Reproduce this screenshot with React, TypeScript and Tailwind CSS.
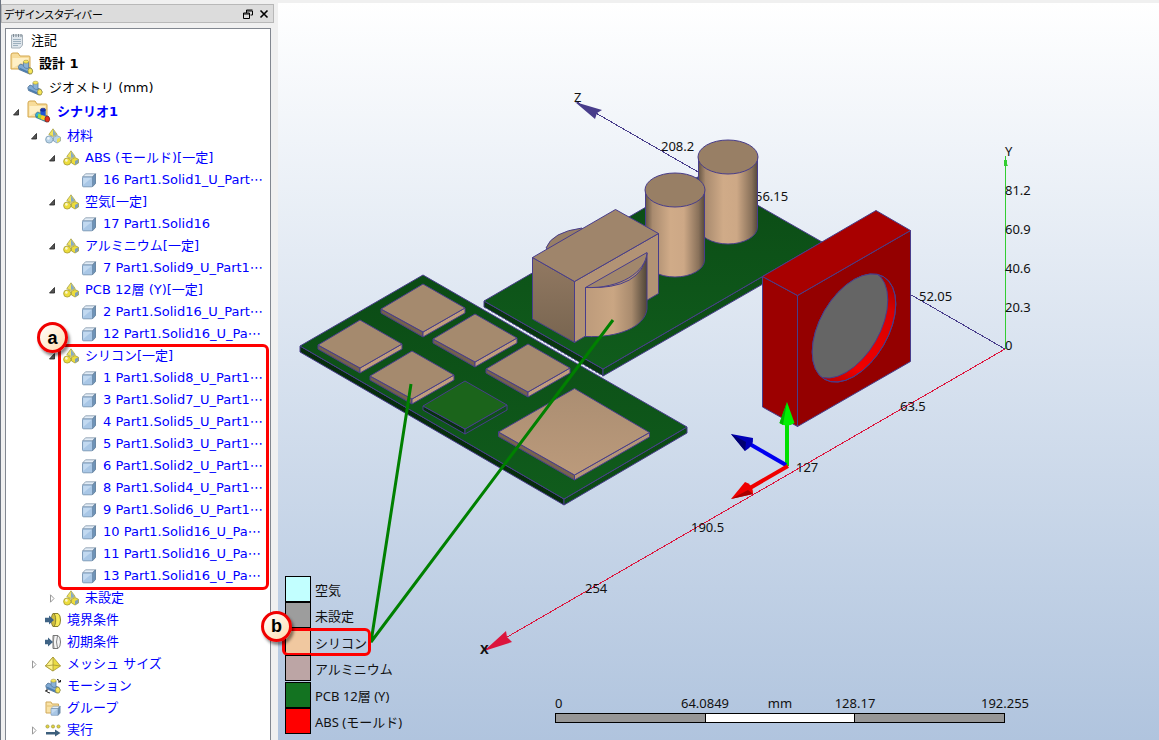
import { useState } from "react";
import type { ReactNode } from "react";

type IconName =
  | "note"
  | "designFolder"
  | "geometry"
  | "scenarioFolder"
  | "materials"
  | "material"
  | "part"
  | "boundary"
  | "initial"
  | "mesh"
  | "motion"
  | "group"
  | "run";

type TreeItem = {
  label: string;
  icon: IconName;
  depth: number;
  closed?: boolean;
  marked?: boolean;
  children?: TreeItem[];
};

const part = (label: string): TreeItem => ({ label, icon: "part", depth: 3 });

const tree: TreeItem[] = [
  { label: "材料", icon: "materials", depth: 1, children: [
    { label: "ABS (モールド)[一定]", icon: "material", depth: 2, children: [part("16 Part1.Solid1_U_Part⋯")] },
    { label: "空気[一定]", icon: "material", depth: 2, children: [part("17 Part1.Solid16")] },
    { label: "アルミニウム[一定]", icon: "material", depth: 2, children: [part("7 Part1.Solid9_U_Part1⋯")] },
    { label: "PCB 12層 (Y)[一定]", icon: "material", depth: 2, children: [
      part("2 Part1.Solid16_U_Part⋯"),
      part("12 Part1.Solid16_U_Pa⋯"),
    ] },
    { label: "シリコン[一定]", icon: "material", depth: 2, marked: true, children: [
      part("1 Part1.Solid8_U_Part1⋯"),
      part("3 Part1.Solid7_U_Part1⋯"),
      part("4 Part1.Solid5_U_Part1⋯"),
      part("5 Part1.Solid3_U_Part1⋯"),
      part("6 Part1.Solid2_U_Part1⋯"),
      part("8 Part1.Solid4_U_Part1⋯"),
      part("9 Part1.Solid6_U_Part1⋯"),
      part("10 Part1.Solid16_U_Pa⋯"),
      part("11 Part1.Solid16_U_Pa⋯"),
      part("13 Part1.Solid16_U_Pa⋯"),
    ] },
    { label: "未設定", icon: "material", depth: 2, closed: true, children: [] },
  ] },
  { label: "境界条件", icon: "boundary", depth: 1 },
  { label: "初期条件", icon: "initial", depth: 1 },
  { label: "メッシュ サイズ", icon: "mesh", depth: 1, closed: true, children: [] },
  { label: "モーション", icon: "motion", depth: 1 },
  { label: "グループ", icon: "group", depth: 1 },
  { label: "実行", icon: "run", depth: 1, closed: true, children: [] },
];

const indent = ["pl-[4px]", "pl-[22px]", "pl-[40px]", "pl-[58px]"];

function Pipe({ hot = false }: { hot?: boolean }) {
  return (
    <g strokeLinejoin="round">
      <path d="M3 5 L14 9.5 Q16 12 14 14.5 L12 15 L1.5 10.5 Q-.5 7 3 5Z" fill={hot ? "#2fb4d8" : "#7fa9d3"} stroke="#4f7194" strokeWidth=".8" />
      <path d="M2 9.5 L12 14" stroke={hot ? "#1d7f9c" : "#4c7cac"} strokeWidth="1.5" />
      <path d="M6 7.5 V3 H11 V9.5 Q8 10 6 7.5Z" fill={hot ? "#1f55d8" : "#89b1d8"} stroke="#587c9e" strokeWidth=".8" />
      <ellipse cx="8.5" cy="2.7" rx="2.6" ry="1.5" fill={hot ? "#1733b8" : "#f6e65a"} stroke={hot ? "#10257d" : "#a59a3a"} strokeWidth=".6" />
      {hot && <path d="M4 6.5 L7 8 L6 12 L3 10.5Z" fill="#9fdb40" />}
      {hot && <path d="M7 8 L10.5 9 L10 13.5 L6 12Z" fill="#ffcf22" />}
      <path d="M12 9 L14 9.5 Q16.5 12 14 15 L11 14.5 Q9.5 11 12 9Z" fill={hot ? "#e8321c" : "#f6e65a"} stroke={hot ? "#8b2015" : "#8f873a"} strokeWidth=".7" />
    </g>
  );
}

function Folder() {
  return (
    <>
      <path d="M1 17 V3 Q1 1 3 1 H8 L10 4 H19 Q20 4 20 5 V17Z" fill="#f7dc9a" stroke="#d3a64c" />
      <path d="M2.5 6 H18.5 V16 H2.5Z" fill="#fff0c6" />
      <path d="M2.5 16 L18.5 7 V16Z" fill="#f8e0a5" />
    </>
  );
}

function MaterialShapes({ pale = false }: { pale?: boolean }) {
  const side = pale ? "#b9d3e8" : "#ecdc3c";
  const edge = pale ? "#6f90a8" : "#9a9028";
  return (
    <>
      <path d="M8 .8 L12.2 6.5 L8 8.5 L3.8 6.5Z" fill="#f1e45a" stroke="#a19a3f" strokeWidth=".7" />
      <path d="M8 1.5 L11.5 6.5 L8 8Z" fill="#86aac6" />
      <circle cx="4.2" cy="11.5" r="3.6" fill={side} stroke={edge} strokeWidth=".7" />
      <circle cx="3.4" cy="10.4" r="1.3" fill="#fff" opacity=".75" />
      <path d="M12 7.5 L15.5 9.3 V13 L12 15 L8.5 13 V9.3Z" fill={side} stroke={edge} strokeWidth=".7" />
      <path d="M12 11 L15.3 9.3 V13 L12 14.8Z" fill={pale ? "#e9dd58" : "#7f9fb8"} />
    </>
  );
}

function Cube() {
  return (
    <g strokeLinejoin="round" strokeWidth=".8">
      <path d="M1.5 5 L4.5 1.8 H14.5 L11.5 5Z" fill="#e3edf7" stroke="#8296a9" />
      <path d="M11.5 5 L14.5 1.8 V11.5 L11.5 14.8Z" fill="#6e93b8" stroke="#5b7896" />
      <rect x="1.5" y="5" width="10" height="9.8" rx="1" fill="#a9c7e6" stroke="#6c8bab" />
      <path d="M2.2 5.8 H10.8 L2.2 13Z" fill="#c2d9f0" />
    </g>
  );
}

const icons: Record<IconName, ReactNode> = {
  note: (
    <>
      <path d="M2.5 2 H13.5 V12 L11 15 H2.5Z" fill="#dfe6ec" stroke="#a5b0b9" />
      <path d="M4 6.5 H12 M4 8.5 H12 M4 10.5 H12 M4 12.5 H9" stroke="#9db0be" />
      <path d="M4.5 1 V4 M7 1 V4 M9.5 1 V4 M12 1 V4" stroke="#7f8a93" />
    </>
  ),
  designFolder: <><Folder /><g transform="translate(7.5 7)"><Pipe /></g></>,
  scenarioFolder: <><Folder /><g transform="translate(7.5 7)"><Pipe hot /></g></>,
  geometry: <Pipe />,
  materials: <MaterialShapes pale />,
  material: <MaterialShapes />,
  part: <Cube />,
  boundary: (
    <>
      <path d="M8 1.5 H13 Q15.5 3 15.5 8 T13 14.5 H8Z" fill="#f7ea58" stroke="#8a812d" />
      <ellipse cx="8.5" cy="8" rx="2.2" ry="6.5" fill="#cfbd3c" stroke="#77702a" strokeWidth=".8" />
      <path d="M0 5.8 H4 V3.5 L9 8 L4 12.5 V10.2 H0Z" fill="#3f6385" />
    </>
  ),
  initial: (
    <>
      <path d="M8 1.5 H13 Q15.5 3 15.5 8 T13 14.5 H8Z" fill="#f5f5f5" stroke="#777" />
      <path d="M9 2 Q7.5 8 9 14 M12.5 2 Q10.5 8 12.5 14" fill="none" stroke="#888" />
      <path d="M0 5.8 H3 V3.5 L8 8 L3 12.5 V10.2 H0Z" fill="#3f6385" />
    </>
  ),
  mesh: (
    <g stroke="#a39535" strokeWidth=".8" strokeLinejoin="round">
      <path d="M8 1 L15.5 10 L8 15 L.5 10Z" fill="#eadb43" />
      <path d="M8 1 V15 L.5 10Z" fill="#fdf38a" />
      <path d="M.5 10 L8 9 L15.5 10" fill="none" />
    </g>
  ),
  motion: (
    <>
      <Pipe />
      <path d="M12 1.5 Q14 1 14.5 4 M13 4 H15.5 V2 M1 12 Q2 15 5 15 M1 14 V12 H3" fill="none" stroke="#222" />
    </>
  ),
  group: (
    <>
      <path d="M1 13 V2 H6 L7 4 H13.5 V13Z" fill="#f9e2a6" stroke="#d0a95a" />
      <path d="M2 6 H13" stroke="#e2bf70" />
      <g transform="translate(5 5) scale(.7)"><Cube /></g>
    </>
  ),
  run: (
    <>
      <g fill="#e3d53d" stroke="#8d8632" strokeWidth=".6">
        <circle cx="2.5" cy="4.5" r="1.6" />
        <circle cx="8" cy="4.5" r="1.6" />
        <circle cx="13.5" cy="4.5" r="1.6" />
      </g>
      <path d="M1 10 H10 V7.5 L15.5 11 L10 14.5 V12.5 H1Z" fill="#3c5f7c" />
    </>
  ),
};

function Icon({ name }: { name: IconName }) {
  const big = name === "designFolder" || name === "scenarioFolder";
  return (
    <svg className={big ? "size-6 shrink-0" : "size-4 shrink-0"} viewBox={big ? "0 0 24 24" : "0 0 16 16"} aria-hidden="true">
      {icons[name]}
    </svg>
  );
}

function Badge({ children, className }: { children: ReactNode; className: string }) {
  return (
    <span className={`absolute z-20 flex size-[31px] items-center justify-center rounded-full border-[3px] border-[#f00000] bg-linear-to-br from-white to-[#ffdcae] font-['Liberation_Sans',sans-serif] text-lg leading-none font-bold text-black shadow-[2px_3px_3px_rgba(0,0,0,0.45)] ${className}`}>
      {children}
    </span>
  );
}

function Toggle({ open, label, onClick }: { open: boolean; label: string; onClick: () => void }) {
  return (
    <button type="button" aria-label={label} aria-expanded={open} onClick={onClick} className="mr-[5px] flex w-3 shrink-0 justify-center">
      <svg className="size-[9px]" viewBox="0 0 9 9" aria-hidden="true">
        {open
          ? <path d="M6.5 1.5 V7 H1.5Z" fill="#555" stroke="#222" strokeWidth=".8" />
          : <path d="M2.5 .8 L6 4.5 L2.5 8.2Z" fill="#fff" stroke="#999" />}
      </svg>
    </button>
  );
}

function TreeNode({ item }: { item: TreeItem }) {
  const [open, setOpen] = useState(!item.closed);

  return (
    <li className="relative">
      <div className={`flex h-[22px] items-center whitespace-nowrap ${indent[item.depth]}`}>
        {item.children
          ? <Toggle open={open} label={item.label} onClick={() => setOpen(!open)} />
          : <span className="mr-[5px] w-3 shrink-0" />}
        <Icon name={item.icon} />
        <span className="ml-[6px]">{item.label}</span>
      </div>
      {open && item.children && item.children.length > 0 && (
        <ul>
          {item.children.map((child) => <TreeNode key={child.label} item={child} />)}
        </ul>
      )}
      {item.marked && (
        <>
          <span className="pointer-events-none absolute -top-px right-px -bottom-[3px] left-[52px] rounded-md border-[3px] border-[#ff0000]" />
          <Badge className="-top-[23px] left-[31px]">a</Badge>
        </>
      )}
    </li>
  );
}

function Sidebar() {
  const [open, setOpen] = useState(true);

  return (
    <aside className="flex w-[278px] shrink-0 flex-col border-l border-[#6b7380] bg-[#f0f0f0] pt-1">
      <div className="mr-1 flex h-[19px] items-center justify-between border border-[#b8b8b8] bg-[#dcdcdc] pr-1 pl-0.5">
        <h2 className="font-['Noto_Sans_CJK_JP',sans-serif] text-[11px] leading-4 [font-feature-settings:'palt']">デザインスタディバー</h2>
        <div className="flex gap-1.5">
          <button type="button" aria-label="フロート">
            <svg className="size-[10px]" viewBox="0 0 10 10" aria-hidden="true">
              <path d="M3.5 1 H9.5 M3.5 2 H9.5 V6 H7.5 M3.5 1 V4 M.5 4 H6.5 V9.5 H.5Z M.5 5 H6.5" fill="none" stroke="#000" />
            </svg>
          </button>
          <button type="button" aria-label="閉じる">
            <svg className="size-[10px]" viewBox="0 0 10 10" aria-hidden="true">
              <path d="M1.5 1.5 L8.5 8.5 M8.5 1.5 L1.5 8.5" stroke="#000" strokeWidth="1.6" />
            </svg>
          </button>
        </div>
      </div>
      <nav className="mt-[5px] mr-[7px] ml-1 min-h-0 flex-1 overflow-hidden border border-b-0 border-[#828790] bg-white text-[13px] leading-[22px]">
        <div className="flex h-[23px] items-center gap-[6px] pl-[3px]"><Icon name="note" />注記</div>
        <div className="flex h-6 items-center gap-[5px] pl-[4px] font-bold"><Icon name="designFolder" />設計 1</div>
        <div className="flex h-6 items-center gap-[6px] pl-[21px]"><Icon name="geometry" />ジオメトリ (mm)</div>
        <div className="flex h-6 items-center pl-[4px] font-bold text-[#0000ff]">
          <Toggle open={open} label="シナリオ1" onClick={() => setOpen(!open)} />
          <Icon name="scenarioFolder" />
          <span className="ml-[6px]">シナリオ1</span>
        </div>
        {open && (
          <ul className="pt-px text-[#0000ff]">
            {tree.map((item) => <TreeNode key={item.label} item={item} />)}
          </ul>
        )}
      </nav>
    </aside>
  );
}

const edge = "#483d8b";

function Chip({ x, y, green = false }: { x: number; y: number; green?: boolean }) {
  return (
    <g transform={`translate(${x} ${y})`} stroke={edge} strokeWidth="1">
      <path d="M-42 25 L0 48 V53 L-42 29Z" fill={green ? "#06320f" : "#73604e"} />
      <path d="M0 48 L42 24 V29 L0 53Z" fill={green ? "#0e501a" : "#c19e7d"} />
      <path d="M0 0 L42 24 L0 48 L-42 25Z" fill={green ? "#1b641b" : "#a58a6e"} />
    </g>
  );
}

function Cylinder({ x, y }: { x: number; y: number }) {
  return (
    <g transform={`translate(${x} ${y})`}>
      <path d="M-29.5 0 V70 A29.5 17 0 0 0 29.5 70 V0Z" fill="url(#barrel)" />
      <path d="M-29.5 0 V70 A29.5 17 0 0 0 29.5 70 V0" fill="none" stroke={edge} />
      <ellipse rx="30" ry="17" fill="#987f65" stroke={edge} />
    </g>
  );
}

const axisLabels: [string, number, number][] = [
  ["Z", 574, 102],
  ["208.2", 661, 151],
  ["Y", 1005, 156],
  ["81.2", 1005, 195],
  ["60.9", 1005, 234],
  ["40.6", 1005, 273],
  ["20.3", 1005, 312],
  ["0", 1005, 350],
  ["52.05", 919, 301],
  ["63.5", 900, 411],
  ["127", 796, 472],
  ["190.5", 691, 532],
  ["254", 585, 593],
];

function Model() {
  return (
    <svg className="absolute inset-0 size-full" viewBox="278 3 881 737" preserveAspectRatio="xMinYMin meet" role="img" aria-label="3D モデル">
      <defs>
        <linearGradient id="barrel">
          <stop offset="0" stopColor="#665543" />
          <stop offset=".12" stopColor="#a98b6f" />
          <stop offset=".42" stopColor="#d0ab88" />
          <stop offset=".65" stopColor="#cda886" />
          <stop offset=".9" stopColor="#89715a" />
          <stop offset="1" stopColor="#55493b" />
        </linearGradient>
        <linearGradient id="drum">
          <stop offset="0" stopColor="#bd9b7b" />
          <stop offset=".45" stopColor="#caa683" />
          <stop offset=".75" stopColor="#a98b6e" />
          <stop offset="1" stopColor="#4e4437" />
        </linearGradient>
        <linearGradient id="board" x1="0" y1="0" x2="0" y2="1">
          <stop offset="0" stopColor="#0b4b15" />
          <stop offset="1" stopColor="#105c1c" />
        </linearGradient>
        <linearGradient id="plate" x1="0" y1="0" x2="0" y2="1">
          <stop offset="0" stopColor="#ab8e72" />
          <stop offset="1" stopColor="#bb9a7b" />
        </linearGradient>
        <linearGradient id="boxSide" x1="0" y1="0" x2="0" y2="1">
          <stop offset="0" stopColor="#927962" />
          <stop offset="1" stopColor="#786550" />
        </linearGradient>
        <linearGradient id="bore" x1="1" y1="0" x2="0" y2="1">
          <stop offset="0" stopColor="#700000" />
          <stop offset=".3" stopColor="#d80000" />
          <stop offset=".7" stopColor="#f00000" />
          <stop offset="1" stopColor="#8a0000" />
        </linearGradient>
        <clipPath id="boreClip">
          <circle r=".37" transform="matrix(113 -65 0 131 854 328)" />
        </clipPath>
      </defs>

      {/* axes */}
      <g shapeRendering="crispEdges" fill="none">
        <path d="M1005 349 L483 651" stroke="#dc143c" />
        <path d="M1005 349 L575 101" stroke={edge} />
        <path d="M1005.5 349 V156" stroke="#32cd32" />
      </g>
      <path d="M1004 160 H1007 V164 L1008 166 H1004Z" fill="#32cd32" />
      <path d="M575 102 L602 110 L597 113 L595 119Z" fill={edge} />
      <path d="M484 651 L506 631 L507 637 L512 642Z" fill="#dc143c" />
      <text x="755" y="201" fontSize="13" fill="#111">56.15</text>

      {/* rear board */}
      <g stroke={edge} strokeLinejoin="round">
        <path d="M484 301 L603 369 V376 L484 307Z" fill="#08370f" />
        <path d="M603 369 L822 242 V250 L603 376Z" fill="#0d4d17" />
        <path d="M484 301 L703 174 L822 242 L603 369Z" fill="url(#board)" />
      </g>
      <Cylinder x={728} y={157} />
      <Cylinder x={675} y={190} />
      <g stroke={edge} strokeLinejoin="round">
        <path d="M546 248 Q552 232 582 228 L590 240 L560 258Z" fill="#987f66" />
        <path d="M532.5 257.5 L574.5 281.5 V342.5 L532.5 319Z" fill="url(#boxSide)" />
        <path d="M574.5 281.5 L658.5 233.5 V293.5 L574.5 342.5Z" fill="#b29375" />
        <path d="M615.5 209.5 L658.5 233.5 L574.5 281.5 L532.5 257.5Z" fill="#9f856b" />
        <path d="M585.5 287.5 Q642 290 647 253 V309 C645 327 618 338 585.5 336.5Z" fill="url(#drum)" />
        <path d="M585.5 287.5 L647 252.5 C646 272 620 289 585.5 287.5Z" fill="#a1876c" />
      </g>

      {/* front board */}
      <g stroke={edge} strokeLinejoin="round">
        <path d="M300 346 L564 499 V505 L300 352Z" fill="#062c0c" />
        <path d="M564 499 L687 427 V433 L564 505Z" fill="#0c4a15" />
        <path d="M423 275 L687 427 L564 499 L300 346Z" fill="url(#board)" />
      </g>
      <path d="M486 309 L602 376" stroke="#fff" strokeDasharray="2 2" />
      <Chip x={423} y={284} />
      <Chip x={360} y={320} />
      <Chip x={475} y={314} />
      <Chip x={412} y={351} />
      <Chip x={528} y={344} />
      <Chip x={465} y={381} green />
      <g stroke={edge} strokeLinejoin="round">
        <path d="M498.5 432 L574.5 475 V480 L498.5 436.5Z" fill="#77634f" />
        <path d="M574.5 475 L649.5 432.5 V437 L574.5 480Z" fill="#b59678" />
        <path d="M574.5 388.5 L649.5 432.5 L574.5 475 L498.5 432Z" fill="url(#plate)" />
      </g>

      {/* fan housing */}
      <g stroke={edge} strokeLinejoin="round">
        <path d="M762.5 276.5 L797.5 295.5 V426.5 L762.5 407Z" fill="#9c0000" />
        <path d="M797.5 295.5 L910.5 230.5 V361.5 L797.5 426.5Z" fill="#940000" />
        <path d="M876 210.5 L910.5 230.5 L797.5 295.5 L762.5 276.5Z" fill="#a80000" />
        <circle r=".37" transform="matrix(113 -65 0 131 854 328)" fill="url(#bore)" vectorEffect="non-scaling-stroke" />
        <g clipPath="url(#boreClip)">
          <circle r=".37" transform="matrix(113 -65 0 131 846 324)" fill="#656565" vectorEffect="non-scaling-stroke" />
        </g>
        <circle r=".37" transform="matrix(113 -65 0 131 854 328)" fill="none" vectorEffect="non-scaling-stroke" />
      </g>

      {/* triad */}
      <path d="M787 466 V422" stroke="#00e000" strokeWidth="4" />
      <path d="M787 402 L794.5 423 Q787 428 779.5 423Z" fill="#00f000" />
      <path d="M787 402 L783 425 L779.5 423Z" fill="#00b400" />
      <path d="M786 465 L748 443" stroke="#0000f0" strokeWidth="4" />
      <path d="M731 434 L753 438 Q754 446 745 451Z" fill="#0000b8" />
      <path d="M731 434 L746 442 L745 451Z" fill="#000070" />
      <path d="M788 466 L750 488" stroke="#f00000" strokeWidth="4" />
      <path d="M731 499 L745 482 Q753 484 753 494Z" fill="#f00000" />
      <path d="M731 499 L748 490 L753 494Z" fill="#a80000" />

      <g fontSize="13" fill="#111">
        {axisLabels.map(([label, x, y]) => <text key={label} x={x} y={y}>{label}</text>)}
        <text x="480" y="654" fontWeight="bold">X</text>
      </g>

      {/* callout lines */}
      <path d="M411 384 L371 642 L613 320" fill="none" stroke="#008000" strokeWidth="3" strokeLinejoin="bevel" />
    </svg>
  );
}

const legend = [
  { label: "空気", color: "bg-[#c2ffff]" },
  { label: "未設定", color: "bg-[#9d9d9d]" },
  { label: "シリコン", color: "bg-[#f0c8a0]", marked: true },
  { label: "アルミニウム", color: "bg-[#bca5a5]" },
  { label: "PCB 12層 (Y)", color: "bg-[#137321]" },
  { label: "ABS (モールド)", color: "bg-[#ff0000]" },
];

function Legend() {
  return (
    <ul className="absolute bottom-[6px] left-[7px] flex h-[158px] flex-col items-start justify-between text-[13px] leading-5 text-[#111]">
      {legend.map((entry) => (
        <li key={entry.label} className="relative flex h-[26px] items-center gap-1">
          <span className={`h-full w-[26px] border border-black ${entry.color}`} />
          <span className="pt-0.5">{entry.label}</span>
          {entry.marked && (
            <>
              <span className="absolute -top-px -right-1 -bottom-px -left-[3px] rounded-md border-[3px] border-[#ff0000]" />
              <Badge className="-top-[18px] -left-[24px]">b</Badge>
            </>
          )}
        </li>
      ))}
    </ul>
  );
}

function ScaleBar() {
  return (
    <div className="absolute bottom-[17px] left-[277px] w-[450px] text-[13px] leading-5 text-[#111]">
      <div className="flex">
        <div className="flex-1">0</div>
        <div className="flex flex-1 justify-between">
          <span className="flex w-0 justify-center">64.0849</span>
          <span>mm</span>
          <span className="flex w-0 justify-center">128.17</span>
        </div>
        <div className="flex flex-1 justify-end">
          <span className="flex w-0 justify-center">192.255</span>
        </div>
      </div>
      <div className="flex h-[10px] divide-x divide-black border border-black">
        <div className="flex-1 bg-[#969696]" />
        <div className="flex-1 bg-white" />
        <div className="flex-1 bg-[#969696]" />
      </div>
    </div>
  );
}

export default function App() {
  return (
    <div className="flex h-screen overflow-hidden bg-[#f0f0f0] font-['DejaVu_Sans','Noto_Sans_CJK_JP',sans-serif] text-black">
      <Sidebar />
      <main className="relative mt-[3px] min-w-0 flex-1 bg-linear-to-b from-white to-[#b0c4de] font-['Noto_Sans','Noto_Sans_CJK_JP',sans-serif]">
        <Model />
        <ScaleBar />
        <Legend />
      </main>
    </div>
  );
}
